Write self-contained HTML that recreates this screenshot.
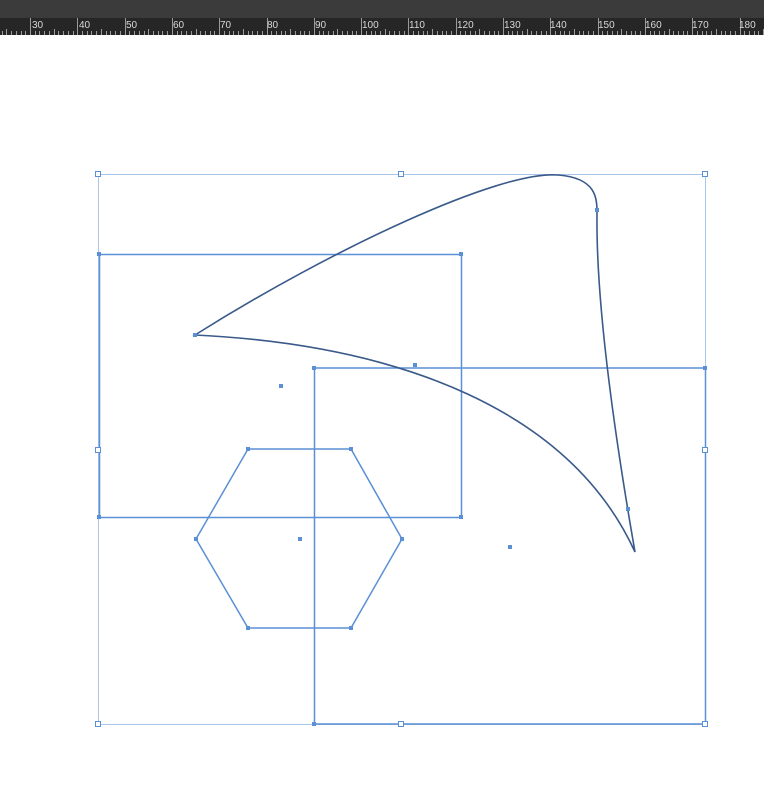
<!DOCTYPE html>
<html><head><style>
html,body{margin:0;padding:0;background:#fff;width:764px;height:791px;overflow:hidden}
</style></head><body>
<svg width="764" height="791" xmlns="http://www.w3.org/2000/svg" style="position:absolute;left:0;top:0">
<rect x="0" y="0" width="764" height="18" fill="#3b3b3b"/>
<rect x="0" y="18" width="764" height="17" fill="#262626"/>
<g stroke="#9a9a9a" stroke-width="1" id="ticks"></g>
<g font-family="Liberation Sans, sans-serif" font-size="10" fill="#d8d8d8">
<text x="32" y="28">30</text><text x="79" y="28">40</text><text x="126" y="28">50</text><text x="173" y="28">60</text><text x="220" y="28">70</text><text x="267" y="28">80</text><text x="315" y="28">90</text><text x="362" y="28">100</text><text x="409" y="28">110</text><text x="457" y="28">120</text><text x="504" y="28">130</text><text x="550" y="28">140</text><text x="598" y="28">150</text><text x="645" y="28">160</text><text x="692" y="28">170</text><text x="739" y="28">180</text>
</g>
<g fill="none" stroke="#a9c6ea" stroke-width="1">
<rect x="98.5" y="174.5" width="607" height="550"/>
</g>
<g fill="none" stroke="#5b8fd6" stroke-width="1.5">
<rect x="99.5" y="254.5" width="362" height="263"/>
<rect x="314.5" y="368" width="391" height="356"/>
<polygon points="248,449 351,449 402,539 351,628 248,628 196,539"/>
</g>
<path d="M195,335 C330,250 500,170 558,175 C598,178 597,200 597,215 C596,300 612,420 635,552 C570,410 400,345 195,335 Z" fill="none" stroke="#3a5a8a" stroke-width="1.6"/>
<g fill="#fff" stroke="#5b8fd6" stroke-width="1">
<rect x="95.5" y="171.5" width="5" height="5"/><rect x="398.5" y="171.5" width="5" height="5"/><rect x="702.5" y="171.5" width="5" height="5"/>
<rect x="95.5" y="447.5" width="5" height="5"/><rect x="702.5" y="447.5" width="5" height="5"/>
<rect x="95.5" y="721.5" width="5" height="5"/><rect x="398.5" y="721.5" width="5" height="5"/><rect x="702.5" y="721.5" width="5" height="5"/>
</g>
<g fill="#5b8fd6">
<rect x="97" y="252" width="4" height="4"/><rect x="459" y="252" width="4" height="4"/><rect x="97" y="515" width="4" height="4"/><rect x="459" y="515" width="4" height="4"/>
<rect x="312" y="366" width="4" height="4"/><rect x="703" y="366" width="4" height="4"/><rect x="312" y="722" width="4" height="4"/>
<rect x="246" y="447" width="4" height="4"/><rect x="349" y="447" width="4" height="4"/><rect x="400" y="537" width="4" height="4"/><rect x="349" y="626" width="4" height="4"/><rect x="246" y="626" width="4" height="4"/><rect x="194" y="537" width="4" height="4"/>
<rect x="193" y="333" width="4" height="4"/><rect x="595" y="208" width="4" height="4"/><rect x="626" y="507" width="4" height="4"/>
<rect x="279" y="384" width="4" height="4"/><rect x="413" y="363" width="4" height="4"/><rect x="298" y="537" width="4" height="4"/><rect x="508" y="545" width="4" height="4"/>
</g>
</svg>
<script>
var g=document.getElementById('ticks'),s='';
for(var i=-10;i<160;i++){var x=30+i*4.73;if(x<0||x>764)continue;var m=i%10==0;var y1=m?18:(i%5==0?29:31);s+='<line x1="'+(Math.round(x)+0.5)+'" y1="'+y1+'" x2="'+(Math.round(x)+0.5)+'" y2="35"/>';}
g.innerHTML=s;
</script>
</body></html>
